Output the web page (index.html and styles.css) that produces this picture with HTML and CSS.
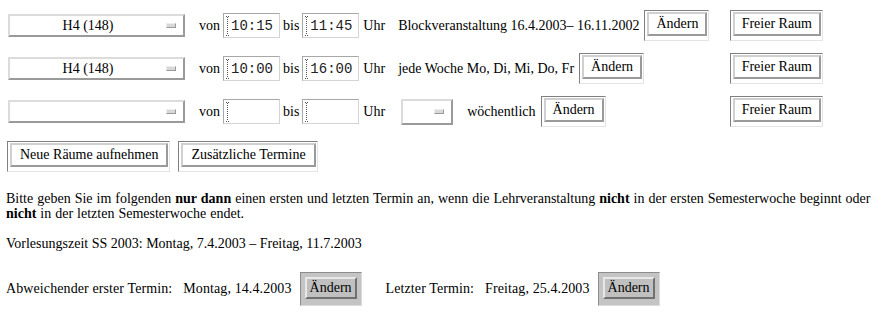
FILE: index.html
```html
<!DOCTYPE html>
<html lang="de">
<head>
	<meta charset="UTF-8">
	<title>Termine und Räume</title>
	<link rel="stylesheet" href="styles.css">
</head>
<body>
	<form class="page">
		<div class="slots">
			<div class="slot">
				<div class="select room"><span class="select-value">H4 (148)</span><span class="select-knob"></span></div>
				<span class="lbl">von</span>
				<span class="field"><svg class="caret" width="4" height="20" viewBox="0 0 4 20"><path d="M0 0.5h3M1.5 1v18M0 19.5h3" stroke="#555" stroke-dasharray="1 1"/></svg><input value="10:15"></span>
				<span class="lbl">bis</span>
				<span class="field"><svg class="caret" width="4" height="20" viewBox="0 0 4 20"><path d="M0 0.5h3M1.5 1v18M0 19.5h3" stroke="#555" stroke-dasharray="1 1"/></svg><input value="11:45"></span>
				<span class="lbl uhr">Uhr</span>
				<div class="desc">
					<span>Blockveranstaltung 16.4.2003– 16.11.2002</span>
					<span class="btnwrap"><button type="button">Ändern</button></span>
				</div>
				<span class="btnwrap free"><button type="button">Freier Raum</button></span>
			</div>
			<div class="slot">
				<div class="select room"><span class="select-value">H4 (148)</span><span class="select-knob"></span></div>
				<span class="lbl">von</span>
				<span class="field"><svg class="caret" width="4" height="20" viewBox="0 0 4 20"><path d="M0 0.5h3M1.5 1v18M0 19.5h3" stroke="#555" stroke-dasharray="1 1"/></svg><input value="10:00"></span>
				<span class="lbl">bis</span>
				<span class="field"><svg class="caret" width="4" height="20" viewBox="0 0 4 20"><path d="M0 0.5h3M1.5 1v18M0 19.5h3" stroke="#555" stroke-dasharray="1 1"/></svg><input value="16:00"></span>
				<span class="lbl uhr">Uhr</span>
				<div class="desc">
					<span>jede Woche Mo, Di, Mi, Do, Fr</span>
					<span class="btnwrap"><button type="button">Ändern</button></span>
				</div>
				<span class="btnwrap free"><button type="button">Freier Raum</button></span>
			</div>
			<div class="slot">
				<div class="select room"><span class="select-value"></span><span class="select-knob"></span></div>
				<span class="lbl">von</span>
				<span class="field"><svg class="caret" width="4" height="20" viewBox="0 0 4 20"><path d="M0 0.5h3M1.5 1v18M0 19.5h3" stroke="#555" stroke-dasharray="1 1"/></svg><input value=""></span>
				<span class="lbl">bis</span>
				<span class="field"><svg class="caret" width="4" height="20" viewBox="0 0 4 20"><path d="M0 0.5h3M1.5 1v18M0 19.5h3" stroke="#555" stroke-dasharray="1 1"/></svg><input value=""></span>
				<span class="lbl uhr">Uhr</span>
				<div class="desc">
					<div class="select day"><span class="select-value"></span><span class="select-knob"></span></div>
					<span class="weekly">wöchentlich</span>
					<span class="btnwrap"><button type="button">Ändern</button></span>
				</div>
				<span class="btnwrap free"><button type="button">Freier Raum</button></span>
			</div>
		</div>

		<div class="actions">
			<span class="btnwrap"><button type="button">Neue Räume aufnehmen</button></span>
			<span class="btnwrap"><button type="button">Zusätzliche Termine</button></span>
		</div>

		<p class="note">Bitte geben Sie im folgenden <b>nur dann</b> einen ersten und letzten Termin an, wenn die Lehrveranstaltung <b>nicht</b> in der ersten Semesterwoche beginnt oder <b>nicht</b> in der letzten Semesterwoche endet.</p>

		<p class="period">Vorlesungszeit SS 2003: Montag, 7.4.2003 – Freitag, 11.7.2003</p>

		<div class="dates">
			<span>Abweichender erster Termin:</span>
			<span class="date">Montag, 14.4.2003</span>
			<span class="btnwrap gray"><button type="button">Ändern</button></span>
			<span class="last">Letzter Termin:</span>
			<span class="date">Freitag, 25.4.2003</span>
			<span class="btnwrap gray"><button type="button">Ändern</button></span>
		</div>
	</form>
</body>
</html>
```

FILE: styles.css
```css
html, body {
	margin: 0;
	padding: 0;
	background: #fff;
	color: #000;
	font-family: "Liberation Serif", "Times New Roman", serif;
	font-size: 14px;
}
.page {
	padding: 10px 0 0 6px;
}
.slots {
	display: flex;
	flex-direction: column;
	gap: 12px;
	width: 815px;
	margin-left: 2px;
}
.slot {
	display: flex;
	align-items: center;
	height: 31px;
}
.select {
	display: flex;
	align-items: center;
	box-sizing: border-box;
	height: 23px;
	border: 2px solid;
	border-color: #dcdcdc #9a9a9a #9a9a9a #dcdcdc;
	background: #fff;
	padding-right: 7px;
}
.room {
	width: 177px;
	margin-right: 14px;
}
.day {
	width: 52px;
	height: 26px;
	margin-left: 3px;
	margin-right: 9px;
}
.select-value {
	flex: 1;
	text-align: center;
}
.select-knob {
	width: 8px;
	height: 3px;
	border: 1px solid;
	border-color: #eee #999 #999 #eee;
	background: #d8d8d8;
}
.lbl {
	margin-right: 3px;
}
.uhr {
	margin-left: 1px;
	margin-right: 13px;
}
.field {
	display: inline-flex;
	align-items: center;
	box-sizing: border-box;
	width: 57px;
	height: 25px;
	margin-right: 3px;
	padding-left: 2px;
	border: 1px solid;
	border-color: #a8a8a8 #d4d4d4 #d4d4d4 #a8a8a8;
	background: #fff;
}
.field input {
	flex: 1;
	min-width: 0;
	border: none;
	outline: none;
	background: transparent;
	padding: 0 0 0 1px;
	font-family: "Liberation Mono", "Courier New", monospace;
	font-size: 14px;
	color: #222;
}
.caret {
	display: block;
}
.desc {
	display: flex;
	align-items: center;
	gap: 5px;
}
.btnwrap {
	display: inline-block;
	border: 1px solid;
	border-color: #808080 #e4e4e4 #e4e4e4 #808080;
	padding: 1px 1px 4px 2px;
}
.btnwrap button {
	display: block;
	box-sizing: border-box;
	height: 24px;
	margin: 0;
	padding: 0 7px;
	border: 2px solid;
	border-color: #d0d0d0 #9a9a9a #9a9a9a #d0d0d0;
	background: #fff;
	color: #000;
	font-family: "Liberation Serif", "Times New Roman", serif;
	font-size: 14px;
}
.free {
	margin-left: auto;
}
.actions {
	display: flex;
	gap: 8px;
	margin: 14px 0 0 1px;
}
.actions button {
	padding: 0 8px;
}
.note {
	width: 880px;
	margin: 19px 0 0;
	line-height: 15px;
	word-spacing: 0.5px;
}
.period {
	margin: 15px 0 0;
	line-height: 15px;
}
.dates {
	display: flex;
	align-items: center;
	margin-top: 21px;
	letter-spacing: 0.1px;
}
.date {
	margin-left: 11px;
	margin-right: 8px;
}
.last {
	margin-left: 24px;
}
.gray {
	background: #c4c4c4;
	border-color: #8c8c8c #dcdcdc #dcdcdc #8c8c8c;
	padding: 4px 4px 6px 4px;
}
.gray button {
	height: 22px;
	padding: 0 3px;
	background: #c0c0c0;
	border-color: #e8e8e8 #707070 #707070 #e8e8e8;
	letter-spacing: 0;
}
```
